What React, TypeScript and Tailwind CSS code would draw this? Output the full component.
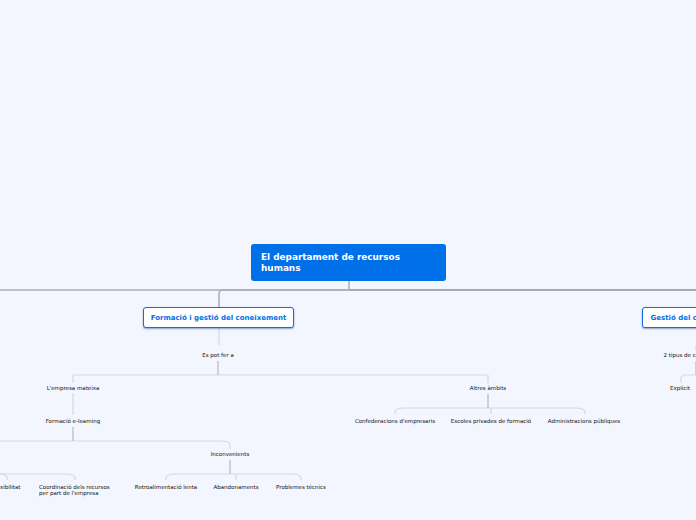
const labels = [
  { text: "Es pot fer a", x: 218, y: 355 },
  { text: "L'empresa mateixa", x: 73, y: 388 },
  { text: "Altres àmbits", x: 488, y: 388 },
  { text: "Formació e-learning", x: 73, y: 421 },
  { text: "Confederacions d'empresaris", x: 395, y: 421 },
  { text: "Escoles privades de formació", x: 491, y: 421 },
  { text: "Administracions públiques", x: 584, y: 421 },
  { text: "Inconvenients", x: 230, y: 454 },
  { text: "Retroalimentació lenta", x: 166, y: 487 },
  { text: "Abandonaments", x: 236, y: 487 },
  { text: "Problemes tècnics", x: 301, y: 487 },
  { text: "2 tipus de coneixement", x: 696, y: 355 },
  { text: "Explícit", x: 680, y: 388 },
];

const heavyLines = [
  "M349 281V290",
  "M0 290H349",
  "M349 290H223Q219 290 219 294V307",
];

const stemLines = [
  "M218 361V375",
  "M696 361V375",
  "M73 427V441",
  "M488 394V408",
  "M230 460V474",
];

const lightLines = [
  "M219 328V345",
  "M696 345V350",
  "M696 375H685Q681 375 681 379V383",
  "M73 375H488",
  "M73 375V383",
  "M488 375V383",
  "M73 393V415",
  "M395 414V412Q395 408 405 408H575Q585 408 585 412V414",
  "M491 408V414",
  "M0 441H220Q230 441 230 445V449",
  "M166 480V478Q166 474 176 474H291Q301 474 301 478V480",
  "M236 474V480",
  "M0 474H65Q75 474 75 478V480",
  "M0 474Q7 474 7 478V480",
];

export default function App() {
  return (
    <div className="relative h-[520px] w-[696px] overflow-hidden bg-[#f3f6ff] font-['DejaVu_Sans',sans-serif]">
      <svg className="absolute inset-0" width="696" height="520" fill="none">
        {lightLines.map((d) => (
          <path key={d} d={d} stroke="#d5d7de" strokeWidth="1.2" />
        ))}
        {stemLines.map((d) => (
          <path key={d} d={d} stroke="#b7b9c0" strokeWidth="1.2" />
        ))}
        {heavyLines.map((d) => (
          <path key={d} d={d} stroke="#abaeb1" strokeWidth="1.5" />
        ))}
        <path d="M349 290H696" stroke="#a8abae" strokeWidth="2" />
      </svg>

      <div className="absolute left-[251px] top-[244px] h-[37px] w-[195px] rounded-[3px] bg-[#0070e8] px-[10px] pt-[8px] text-[8.9px] font-bold leading-[11px] text-white">
        <p className="w-[170px]">El departament de recursos humans</p>
      </div>

      <div className="absolute left-[143px] top-[307px] flex h-[21px] w-[151px] items-center justify-center rounded-[3px] border-[1.5px] border-[#0f70d8] bg-white pt-px text-[7px] font-bold text-[#0070e8] shadow-[0_1px_2px_rgba(0,60,140,0.45)]">
        Formació i gestió del coneixement
      </div>
      <div className="absolute left-[642px] top-[307px] flex h-[21px] w-[130px] items-center rounded-[3px] border-[1.5px] border-[#0f70d8] bg-white pl-[7.5px] pt-px text-[7px] font-bold whitespace-nowrap text-[#0070e8] shadow-[0_1px_2px_rgba(0,60,140,0.45)]">
        Gestió del coneixement
      </div>

      {labels.map((l) => (
        <span
          key={l.text}
          className="absolute -translate-x-1/2 -translate-y-1/2 whitespace-nowrap text-[5.5px] leading-[6px] text-[#111]"
          style={{ left: l.x, top: l.y }}
        >
          {l.text}
        </span>
      ))}

      <span className="absolute left-[-8px] top-[484px] whitespace-nowrap text-[5.5px] leading-[6px] text-[#111]">
        Flexibilitat
      </span>
      <span className="absolute left-[39px] top-[484px] w-[74px] text-[5.5px] leading-[6px] text-[#111]">
        Coordinació dels recursos per part de l'empresa
      </span>
    </div>
  );
}
